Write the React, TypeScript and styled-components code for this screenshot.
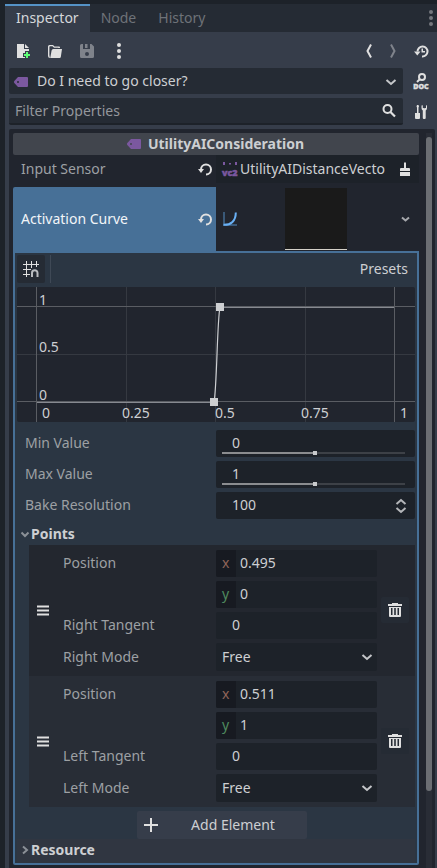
import React, { useState } from "react";
import styled, { createGlobalStyle } from "styled-components";

const c = {
  base: "#1d2229",
  bar: "#252b34",
  panel: "#363d4a",
  well: "#21252e",
  accent: "#477097",
  sub: "#2b3643",
  text: "#cdcfd2",
  label: "#9da0a4",
  icon: "#e0e0e0",
  purple: "#7b589f",
};

const GlobalStyle = createGlobalStyle`
  *, *::before, *::after { box-sizing: border-box; }
  body { margin: 0; background: ${c.base}; }
  body, button, input, select {
    font-family: "Noto Sans", sans-serif;
    font-size: 14px;
    line-height: 20px;
    color: ${c.text};
  }
  button, input, select {
    margin: 0; padding: 0; border: 0; background: none; border-radius: 0; outline-offset: -1px;
  }
  svg { display: block; flex: none; overflow: visible; }
`;

/* ---------- icons ---------- */

const Svg = ({ children, size = 16 }: { children: React.ReactNode; size?: number }) => (
  <svg width={size} height={size} viewBox={`0 0 ${size} ${size}`} fill={c.icon} aria-hidden="true">
    {children}
  </svg>
);

const NewIcon = () => (
  <Svg>
    <path d="M2 1v14h8v-1H8v-4h2V8h4V6H9V1zm8 0v4h4z" />
    <path fill="#5fff77" d="M11 9v2H9v2h2v2h2v-2h2v-2h-2V9z" />
  </Svg>
);
const FolderIcon = () => (
  <Svg>
    <path d="M3 15a2 2 0 0 1-2-2V3.500a1.500 1.500 0 0 1 1.500-1.500H6l1.500 1.500H12a1 1 0 0 1 1 1V5h-1.500L11 4.700H7L5.500 3.300H3a.6.6 0 0 0-.6.600V12z" />
    <path d="M6.500 6H15l-1.200 8a1.200 1.200 0 0 1-1.200 1H3.200L4.600 7.500A1.800 1.800 0 0 1 6.500 6z" />
  </Svg>
);
const SaveIcon = () => (
  <Svg>
    <path
      fill="#7f838b"
      fillRule="evenodd"
      d="M2.500 1H4v5h7V1h1.500L15 3.500v10a1.500 1.500 0 0 1-1.500 1.500h-11A1.500 1.500 0 0 1 1 13.500v-11A1.500 1.500 0 0 1 2.500 1zM6 1h2.500v4H6zM8 9a2 2 0 1 0 0 4 2 2 0 0 0 0-4z"
    />
  </Svg>
);
const DotsIcon = ({ color = c.icon }: { color?: string }) => (
  <Svg>
    <g fill={color}>
      <circle cx="8" cy="2" r="2" />
      <circle cx="8" cy="8" r="2" />
      <circle cx="8" cy="14" r="2" />
    </g>
  </Svg>
);
const ArrowIcon = ({ forward }: { forward?: boolean }) => (
  <Svg>
    <path
      d={forward ? "M6 1.500 9.500 8 6 14.500" : "M10 1.500 6.500 8l3.500 6.500"}
      fill="none"
      stroke={forward ? "#7f838b" : c.icon}
      strokeWidth="2"
    />
  </Svg>
);
const HistoryIcon = () => (
  <Svg>
    <path d="M4.500 8.500a5 5 0 1 1 4.500 5" fill="none" stroke={c.icon} strokeWidth="2" />
    <path d="M1 8.500h6.500L4.300 12.500z" />
    <path d="M8.500 5.500h1.500V8h2v1.500H8.500z" />
  </Svg>
);
const DocIcon = () => (
  <Svg>
    <circle cx="9" cy="4" r="3" fill="none" stroke={c.icon} strokeWidth="2" />
    <path d="M7 6 4 9" stroke={c.icon} strokeWidth="2" />
    <text
      x="8"
      y="16"
      textAnchor="middle"
      fontFamily="Noto Sans, sans-serif"
      fontSize="7"
      fontWeight="900"
      stroke={c.icon}
      strokeWidth="0.4"
    >
      DOC
    </text>
  </Svg>
);
const ToolsIcon = () => (
  <Svg>
    <path d="M4 1h1.500l.5 1.500-.5 1V9H7v5a1 1 0 0 1-1 1H3a1 1 0 0 1-1-1V9h2V3.500l-.5-1z" />
    <path d="M8.500 1.500V4a3 3 0 0 0 1.300 2.500V14a1 1 0 0 0 1 1h.9a1 1 0 0 0 1-1V6.500A3 3 0 0 0 14 4V1.500l-1-.3V4h-1.200l-.5.500-.6-.500H9.800V1.200z" />
  </Svg>
);
const TagIcon = () => (
  <Svg>
    <path
      fill={c.purple}
      fillRule="evenodd"
      d="M5 3 1.300 7a1.500 1.500 0 0 0 0 2L5 13h9a1 1 0 0 0 1-1V4a1 1 0 0 0-1-1zM5 7a1 1 0 1 1 0 2 1 1 0 0 1 0-2z"
    />
  </Svg>
);
const SearchIcon = () => (
  <Svg>
    <circle cx="6.500" cy="6" r="4" fill="none" stroke={c.icon} strokeWidth="2" />
    <path d="m9.500 9 4.500 4.500" stroke={c.icon} strokeWidth="2.200" />
  </Svg>
);
const ChevronIcon = () => (
  <Svg>
    <path d="m3.500 6 4.500 4 4.500-4" fill="none" stroke="#c4c6c9" strokeWidth="2" />
  </Svg>
);
const SmallChevronIcon = () => (
  <Svg>
    <path d="m5 6.500 3.500 3 3.500-3" fill="none" stroke="#a6a8ac" strokeWidth="2" />
  </Svg>
);
const ResetIcon = () => (
  <Svg>
    <path d="M4 8.500a5 5 0 1 1 5 5" fill="none" stroke={c.icon} strokeWidth="2" />
    <path d="M1 8h6l-3 4z" />
  </Svg>
);
const Vec2Icon = () => (
  <Svg>
    <g fill={c.purple}>
      <path d="M1 1h2v3H1zM7 2h2v1.500H7zM13 1h2v3h-2z" />
      <text
        x="0"
        y="15"
        fontFamily="Noto Sans, sans-serif"
        fontSize="9"
        fontWeight="900"
        stroke={c.purple}
        strokeWidth="0.5"
      >
        vc2
      </text>
    </g>
  </Svg>
);
const BrushIcon = () => (
  <Svg>
    <path d="M7 1.500h2V7h3a1 1 0 0 1 1 1v2H3V8a1 1 0 0 1 1-1h3zM3 11h10v4H3z" />
  </Svg>
);
const CurveIcon = () => (
  <Svg>
    <path d="M1 1h2v12h12v2H1z" fill="#3a5978" />
    <path d="M1.500 13.800C9 14 13.800 10 13.800 1.500" fill="none" stroke="#69b0f5" strokeWidth="2" />
  </Svg>
);
const SnapIcon = () => (
  <Svg>
    <path d="M3 0h1v3h4V0h1v3h4V0h1v3h2v1h-2v2h-1V4H9v3H8V4H4v4h4v1H4v4h3v1H4v2H3v-2H0v-1h3V9H0V8h3V4H0V3h3z" />
    <path d="M9 16v-4a2.500 2.500 0 0 1 5.500 0v4" fill="none" stroke="#b9bcc0" strokeWidth="2" />
  </Svg>
);
const SpinIcon = () => (
  <Svg>
    <path d="m3.500 6 4.500-4 4.500 4M3.500 10l4.500 4 4.500-4" fill="none" stroke="#b4b6b9" strokeWidth="2" />
  </Svg>
);
const FoldIcon = ({ closed }: { closed?: boolean }) => (
  <Svg size={12}>
    <path d={closed ? "M4 2.500 8 6 4 9.500" : "M2.500 4.500 6 8l3.500-3.500"} fill="none" stroke="#8b9097" strokeWidth="2" />
  </Svg>
);
const HandleIcon = () => (
  <Svg>
    <path d="M2 2.500h12v2H2zM2 6.500h12v2H2zM2 10.500h12v2H2z" />
  </Svg>
);
const TrashIcon = () => (
  <Svg>
    <path fillRule="evenodd" d="M5 1h6v1h4v2H1V2h4zM2 5h12v9a1 1 0 0 1-1 1H3a1 1 0 0 1-1-1zM4 6v7h1.500V6zM7.200 6v7h1.600V6zM10.500 6v7H12V6z" />
  </Svg>
);
const PlusIcon = () => (
  <Svg>
    <path d="M7 1h2v6h6v2H9v6H7V9H1V7h6z" />
  </Svg>
);

/* ---------- dock ---------- */

const Dock = styled.main`
  display: flex;
  flex-direction: column;
  min-height: 100vh;
  padding: 4px 0 0 5px;
`;
const TabBar = styled.div`
  display: flex;
  height: 28px;
  background: ${c.bar};
`;
const Tab = styled.button<{ $active?: boolean }>`
  padding: 0 11px 2px;
  border-top: 2px solid ${(p) => (p.$active ? "#5592c6" : "transparent")};
  background: ${(p) => (p.$active ? c.panel : "transparent")};
  color: ${(p) => (p.$active ? "#d5d7da" : "#6e7278")};
`;
const TabMenu = styled.button`
  display: flex;
  align-items: center;
  width: 14px;
  margin-left: auto;
`;
const Panel = styled.section`
  display: flex;
  flex: 1;
  flex-direction: column;
  gap: 4px;
  padding: 6px 2px 0 4px;
  background: ${c.panel};
`;
const Toolbar = styled.div`
  display: flex;
  height: 26px;
  align-items: center;
`;
const Spacer = styled.span`
  flex: 1;
`;
const IconButton = styled.button<{ $width?: number }>`
  display: flex;
  flex: none;
  align-items: center;
  justify-content: center;
  width: ${(p) => p.$width ?? 28}px;
  height: 26px;
`;
const BarRow = styled.div<{ $height: number }>`
  display: flex;
  align-items: center;
  gap: 4px;
  height: ${(p) => p.$height}px;
`;
const NodePicker = styled.label`
  position: relative;
  display: flex;
  flex: 1;
  align-self: stretch;
  align-items: center;
  padding: 2px 4px 0;
  border-radius: 2px;
  background: ${c.bar};
`;
const BareSelect = styled.select<{ $inset: number; $lift?: number }>`
  flex: 1;
  min-width: 0;
  height: 100%;
  padding-bottom: ${(p) => p.$lift ?? 0}px;
  padding-left: ${(p) => p.$inset}px;
  appearance: none;
`;
const Overlay = styled.span<{ $right: number }>`
  position: absolute;
  right: ${(p) => p.$right}px;
  pointer-events: none;
`;
const FilterBox = styled.label`
  display: flex;
  flex: 1;
  align-self: stretch;
  align-items: center;
  padding: 0 6px;
  border-bottom: 2px solid ${c.base};
  border-radius: 2px;
  background: ${c.bar};
`;
const FilterInput = styled.input`
  flex: 1;
  min-width: 0;
  &::placeholder { color: #94979c; opacity: 1; }
`;

/* ---------- property list ---------- */

const ScrollArea = styled.div`
  display: flex;
  flex: 1;
  gap: 7px;
  padding: 4px 3px 0 4px;
  border-radius: 2px 2px 0 0;
  background: ${c.well};
`;
const Properties = styled.div`
  flex: 1;
  min-width: 0;
  padding-bottom: 3px;
`;
const ScrollTrack = styled.div`
  width: 6px;
  padding-top: 4px;
  background: #292d36;
`;
const ScrollThumb = styled.div`
  height: 654px;
  border-radius: 3px;
  background: #6b6e73;
`;
const Category = styled.h2`
  display: flex;
  align-items: center;
  justify-content: center;
  gap: 6px;
  height: 22px;
  margin: 0;
  padding-right: 2px;
  border-radius: 2px;
  background: #41454d;
  font-size: 14px;
  font-weight: 700;
`;
const PropertyRow = styled.div<{ $height: number; $selected?: boolean }>`
  display: grid;
  grid-template-columns: 1fr 1fr;
  height: ${(p) => p.$height}px;
  margin-bottom: ${(p) => (p.$selected ? 0 : 4)}px;
`;
const PropertyName = styled.div<{ $selected?: boolean }>`
  display: flex;
  align-items: center;
  justify-content: space-between;
  padding: 0 3px 0 8px;
  border-radius: 2px 0 0 0;
  background: ${(p) => (p.$selected ? c.accent : "transparent")};
  color: ${(p) => (p.$selected ? "#f2f5f8" : c.label)};
`;
const ResourceSlot = styled.div<{ $dark?: boolean }>`
  display: flex;
  align-items: center;
  min-width: 0;
  padding: 0 6px;
  background: ${(p) => (p.$dark ? c.base : "transparent")};
`;
const ResourceButton = styled.button`
  display: flex;
  flex: 1;
  align-items: center;
  gap: 2px;
  min-width: 0;
  height: 100%;
  text-align: left;
`;
const ClippedText = styled.span`
  width: 146px;
  overflow: hidden;
  white-space: nowrap;
`;
const CurvePreview = styled.span`
  width: 62px;
  height: 62px;
  margin-left: 45px;
  border-bottom: 1px solid #d5d1c8;
  background: #1a1a1a;
`;
const IconSlot = styled.button`
  display: flex;
  justify-content: center;
  width: 16px;
`;

const SubInspector = styled.section`
  padding: 2px 2px 0;
  border: 2px solid ${c.accent};
  border-radius: 0 0 2px 2px;
  background: ${c.sub};
`;
const CurveToolbar = styled.div`
  display: flex;
  align-items: center;
  height: 28px;
  margin-bottom: 4px;
`;
const SnapButton = styled.button`
  display: flex;
  align-items: center;
  justify-content: center;
  width: 28px;
  height: 28px;
  border-radius: 2px;
  background: ${c.bar};
`;
const Divider = styled.span`
  width: 1px;
  height: 28px;
  margin-left: 5px;
  background: #3f4956;
`;
const PresetsButton = styled.button`
  margin-left: auto;
  padding: 0 7px;
`;
const Graph = styled.svg`
  width: 100%;
  height: auto;
  margin-bottom: 8px;
  border-radius: 2px;
  background: ${c.well};
`;

const FieldRow = styled.div`
  display: grid;
  grid-template-columns: 1fr 1fr;
  margin-bottom: 4px;
`;
const FieldLabel = styled.label<{ $tall?: boolean }>`
  height: 27px;
  padding: ${(p) => (p.$tall ? 4 : 3)}px 8px 0;
  color: ${c.label};
`;
const ValueBox = styled.div<{ $tall?: boolean }>`
  position: relative;
  display: flex;
  align-items: center;
  min-width: 0;
  height: ${(p) => (p.$tall ? 28 : 27)}px;
  border-radius: 2px;
  background: ${c.base};
`;
const NumberInput = styled.input<{ $inset: number }>`
  flex: 1;
  min-width: 0;
  height: 27px;
  padding: 0 4px 3px ${(p) => p.$inset}px;
`;
const Slider = styled.input`
  position: absolute;
  right: 10px;
  bottom: 2px;
  left: 6px;
  height: 4px;
  appearance: none;
  background: linear-gradient(#8b8d90, #8b8d90) 0 1px / var(--fill) 2px no-repeat,
    linear-gradient(#3d4147, #3d4147) 0 1px / 100% 2px no-repeat;
  &::-webkit-slider-thumb {
    width: 4px;
    height: 4px;
    appearance: none;
    background: #c8cacc;
  }
`;
const Axis = styled.label<{ $color: string }>`
  width: 20px;
  height: 27px;
  padding: 3px 6px;
  border-radius: 2px 0 0 2px;
  background: #171a21;
  color: ${(p) => p.$color};
`;
const Stack = styled.div`
  display: grid;
  gap: 4px;
  min-width: 0;
`;
const SectionButton = styled.button<{ $shade?: boolean }>`
  display: flex;
  align-items: center;
  width: 100%;
  height: ${(p) => (p.$shade ? 24 : 22)}px;
  padding: 0 2px ${(p) => (p.$shade ? 2 : 0)}px;
  background: ${(p) => (p.$shade ? "#303641" : "transparent")};
  font-weight: 700;
`;
const PointItem = styled.div<{ $alt?: boolean }>`
  display: grid;
  grid-template-columns: 26px 1fr 38px;
  align-items: center;
  margin-left: 12px;
  padding-top: 5px;
  background: ${(p) => (p.$alt ? "#282d36" : "#23272f")};
`;
const HandleButton = styled.button`
  display: flex;
  margin-bottom: 4px;
  padding-left: 6px;
`;
const PointFields = styled.div`
  padding-bottom: 1px;
`;
const TrashButton = styled.button`
  display: flex;
  align-items: center;
  justify-content: center;
  width: 28px;
  height: 26px;
  margin: 0 0 6px 4px;
  border-radius: 2px;
  background: ${c.bar};
`;
const AddRow = styled.div`
  display: flex;
  justify-content: center;
  padding: 4px 0 0 12px;
`;
const AddButton = styled.button`
  display: flex;
  align-items: center;
  width: 170px;
  height: 28px;
  padding: 0 6px;
  border-radius: 2px;
  background: ${c.panel};
`;
const AddLabel = styled.span`
  flex: 1;
  padding-left: 6px;
  text-align: center;
`;

/* ---------- parts ---------- */

const SliderField = ({ id, name, initial }: { id: string; name: string; initial: string }) => {
  const [position, setPosition] = useState(51);
  return (
    <FieldRow>
      <FieldLabel htmlFor={id}>{name}</FieldLabel>
      <ValueBox>
        <NumberInput id={id} $inset={16} defaultValue={initial} />
        <Slider
          type="range"
          aria-label={name}
          value={position}
          onChange={(e) => setPosition(Number(e.target.value))}
          style={{ "--fill": `${position}%` } as React.CSSProperties}
        />
      </ValueBox>
    </FieldRow>
  );
};

type PointProps = { id: string; x: string; y: string; side: string; alt?: boolean };

const Point = ({ id, x, y, side, alt }: PointProps) => (
  <PointItem $alt={alt}>
    <HandleButton aria-label="Reorder point">
      <HandleIcon />
    </HandleButton>
    <PointFields>
      <FieldRow>
        <FieldLabel htmlFor={`${id}-x`}>Position</FieldLabel>
        <Stack>
          <ValueBox>
            <Axis htmlFor={`${id}-x`} $color="#8f6459">x</Axis>
            <NumberInput id={`${id}-x`} $inset={4} defaultValue={x} />
          </ValueBox>
          <ValueBox>
            <Axis htmlFor={`${id}-y`} $color="#4f8a5e">y</Axis>
            <NumberInput id={`${id}-y`} $inset={4} defaultValue={y} />
          </ValueBox>
        </Stack>
      </FieldRow>
      <FieldRow>
        <FieldLabel htmlFor={`${id}-tangent`}>{side} Tangent</FieldLabel>
        <ValueBox>
          <NumberInput id={`${id}-tangent`} $inset={16} defaultValue="0" />
        </ValueBox>
      </FieldRow>
      <FieldRow>
        <FieldLabel htmlFor={`${id}-mode`} $tall>{side} Mode</FieldLabel>
        <ValueBox $tall>
          <BareSelect id={`${id}-mode`} $inset={6} defaultValue="Free">
            <option>Free</option>
            <option>Linear</option>
          </BareSelect>
          <Overlay $right={2}>
            <ChevronIcon />
          </Overlay>
        </ValueBox>
      </FieldRow>
    </PointFields>
    <TrashButton aria-label="Delete point">
      <TrashIcon />
    </TrashButton>
  </PointItem>
);

const CurveGraph = () => (
  <Graph viewBox="0 0 398 135" role="img" aria-label="Activation curve">
    <path d="M109.500 0v135M198.500 0v135M288.500 0v135M0 67.500h398" stroke="#353941" />
    <path d="M19.500 0v135M377.500 0v135M0 19.500h398M0 114.500h398" stroke="#5a5d63" />
    <path d="M20 115.500h177M203 20.500h174" stroke="#868990" />
    <path d="M197 115C200 100 200 35 203 20" fill="none" stroke="#cdcfd2" strokeWidth="1.200" />
    <path d="M193 111h8v8h-8zM199 16h8v8h-8z" fill="#cdcfd2" />
    <g fill={c.text} fontSize="14" fontFamily="Noto Sans, sans-serif">
      <text x="22" y="18">1</text>
      <text x="22" y="65">0.5</text>
      <text x="22" y="113">0</text>
      <text x="25" y="131">0</text>
      <text x="105" y="131">0.25</text>
      <text x="198" y="131">0.5</text>
      <text x="284" y="131">0.75</text>
      <text x="383" y="131">1</text>
    </g>
  </Graph>
);

export default function App() {
  return (
    <>
      <GlobalStyle />
      <Dock>
        <TabBar role="tablist">
          <Tab role="tab" aria-selected="true" $active>Inspector</Tab>
          <Tab role="tab" aria-selected="false">Node</Tab>
          <Tab role="tab" aria-selected="false">History</Tab>
          <TabMenu aria-label="Dock menu">
            <DotsIcon color="#75787e" />
          </TabMenu>
        </TabBar>
        <Panel>
          <Toolbar>
            <IconButton aria-label="New resource"><NewIcon /></IconButton>
            <IconButton $width={36} aria-label="Load resource"><FolderIcon /></IconButton>
            <IconButton aria-label="Save resource"><SaveIcon /></IconButton>
            <IconButton $width={36} aria-label="Resource options"><DotsIcon /></IconButton>
            <Spacer />
            <IconButton $width={20} aria-label="Previous object"><ArrowIcon /></IconButton>
            <IconButton aria-label="Next object"><ArrowIcon forward /></IconButton>
            <IconButton aria-label="History"><HistoryIcon /></IconButton>
          </Toolbar>
          <BarRow $height={26}>
            <NodePicker>
              <TagIcon />
              <BareSelect $inset={8} $lift={2} aria-label="Edited object" defaultValue="node">
                <option value="node">Do I need to go closer?</option>
              </BareSelect>
              <Overlay $right={4}>
                <ChevronIcon />
              </Overlay>
            </NodePicker>
            <IconButton aria-label="Open documentation"><DocIcon /></IconButton>
          </BarRow>
          <BarRow $height={27}>
            <FilterBox>
              <FilterInput aria-label="Filter properties" placeholder="Filter Properties" />
              <SearchIcon />
            </FilterBox>
            <IconButton aria-label="Property tools"><ToolsIcon /></IconButton>
          </BarRow>
          <ScrollArea>
            <Properties>
              <Category>
                <TagIcon />
                UtilityAIConsideration
              </Category>
              <PropertyRow $height={28}>
                <PropertyName>
                  Input Sensor
                  <IconSlot aria-label="Reset input sensor"><ResetIcon /></IconSlot>
                </PropertyName>
                <ResourceSlot $dark>
                  <ResourceButton>
                    <Vec2Icon />
                    <ClippedText>UtilityAIDistanceVecto</ClippedText>
                  </ResourceButton>
                  <IconSlot aria-label="Edit sensor"><BrushIcon /></IconSlot>
                </ResourceSlot>
              </PropertyRow>
              <PropertyRow $height={64} $selected>
                <PropertyName $selected>
                  Activation Curve
                  <IconSlot aria-label="Reset activation curve"><ResetIcon /></IconSlot>
                </PropertyName>
                <ResourceSlot>
                  <ResourceButton aria-label="Edit activation curve">
                    <CurveIcon />
                    <CurvePreview />
                  </ResourceButton>
                  <IconSlot aria-label="Curve options"><SmallChevronIcon /></IconSlot>
                </ResourceSlot>
              </PropertyRow>
              <SubInspector>
                <CurveToolbar>
                  <SnapButton aria-label="Toggle grid snap"><SnapIcon /></SnapButton>
                  <Divider />
                  <PresetsButton>Presets</PresetsButton>
                </CurveToolbar>
                <CurveGraph />
                <SliderField id="min-value" name="Min Value" initial="0" />
                <SliderField id="max-value" name="Max Value" initial="1" />
                <FieldRow>
                  <FieldLabel htmlFor="bake">Bake Resolution</FieldLabel>
                  <ValueBox>
                    <NumberInput id="bake" $inset={16} defaultValue="100" />
                    <Overlay $right={6}>
                      <SpinIcon />
                    </Overlay>
                  </ValueBox>
                </FieldRow>
                <SectionButton aria-expanded="true">
                  <FoldIcon />
                  Points
                </SectionButton>
                <Point id="p0" x="0.495" y="0" side="Right" />
                <Point id="p1" x="0.511" y="1" side="Left" alt />
                <AddRow>
                  <AddButton>
                    <PlusIcon />
                    <AddLabel>Add Element</AddLabel>
                  </AddButton>
                </AddRow>
                <SectionButton aria-expanded="false" $shade>
                  <FoldIcon closed />
                  Resource
                </SectionButton>
              </SubInspector>
            </Properties>
            <ScrollTrack>
              <ScrollThumb />
            </ScrollTrack>
          </ScrollArea>
        </Panel>
      </Dock>
    </>
  );
}
